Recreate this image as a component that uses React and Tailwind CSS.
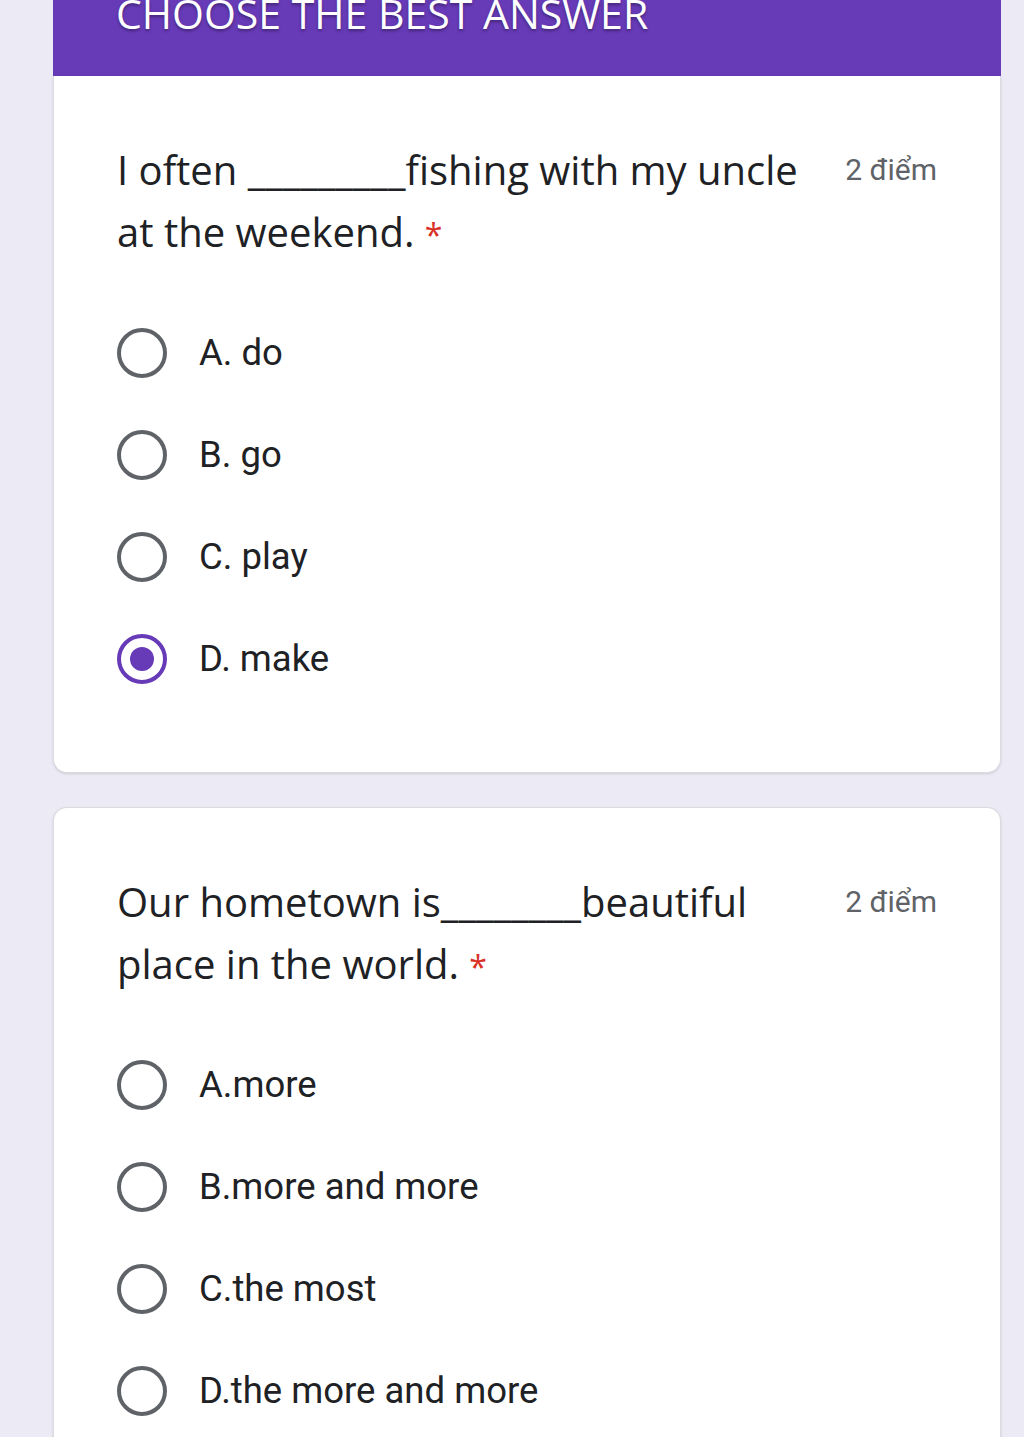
import React from "react";

const questions = [
  {
    text: "I often _________fishing with my uncle at the weekend.",
    options: ["A. do", "B. go", "C. play", "D. make"],
    selected: 3,
  },
  {
    text: "Our hometown is________beautiful place in the world.",
    options: ["A.more", "B.more and more", "C.the most", "D.the more and more"],
    selected: -1,
  },
];

const Radio = ({ checked }) => {
  if (checked) {
    return (
      <div className="w-[50px] h-[50px] rounded-full border-[4px] border-[#673ab7] flex items-center justify-center shrink-0">
        <div className="w-[24px] h-[24px] rounded-full bg-[#673ab7]" />
      </div>
    );
  }
  return <div className="w-[50px] h-[50px] rounded-full border-[4px] border-[#5f6368] shrink-0" />;
};

const QuestionCard = ({ q, first }) => {
  return (
    <div
      className={
        "bg-white border border-[#dadce0] shadow-sm px-[63px] pt-[63px] pb-[62px] " +
        (first ? "rounded-b-[14px] border-t-0" : "rounded-t-[14px] pb-0 border-b-0")
      }
    >
      <div className="flex items-start">
        <div className="flex-1 text-[40px] leading-[62px] text-[#202124] font-['Open_Sans',sans-serif] pr-[30px]">
          {q.text} <span className="text-[32px] text-[#d93025]">*</span>
        </div>
        <div className="text-[30px] leading-[62px] text-[#5f6368] font-['Roboto',sans-serif] whitespace-nowrap">
          2 điểm
        </div>
      </div>
      <div className="mt-[36px] flex flex-col">
        {q.options.map((opt, i) => (
          <div key={opt} className="flex items-center h-[102px] font-['Roboto',sans-serif]">
            <Radio checked={i === q.selected} />
            <span className="ml-[32px] text-[36.5px] text-[#202124]">{opt}</span>
          </div>
        ))}
      </div>
    </div>
  );
};

export default function App() {
  return (
    <div className="h-[1437px] overflow-hidden bg-[#ebeaf5]">
      <div className="ml-[53px] w-[948px]">
        <div className="bg-[#673ab7] h-[76px] overflow-hidden">
          <div className="pl-[63px] mt-[-12px] text-[41px] leading-[50px] text-white font-['Open_Sans',sans-serif] [text-shadow:0_2px_3px_rgba(0,0,0,0.35)]">
            CHOOSE THE BEST ANSWER
          </div>
        </div>
        <QuestionCard q={questions[0]} first />
        <div className="h-[34px]" />
        <QuestionCard q={questions[1]} />
      </div>
    </div>
  );
}
